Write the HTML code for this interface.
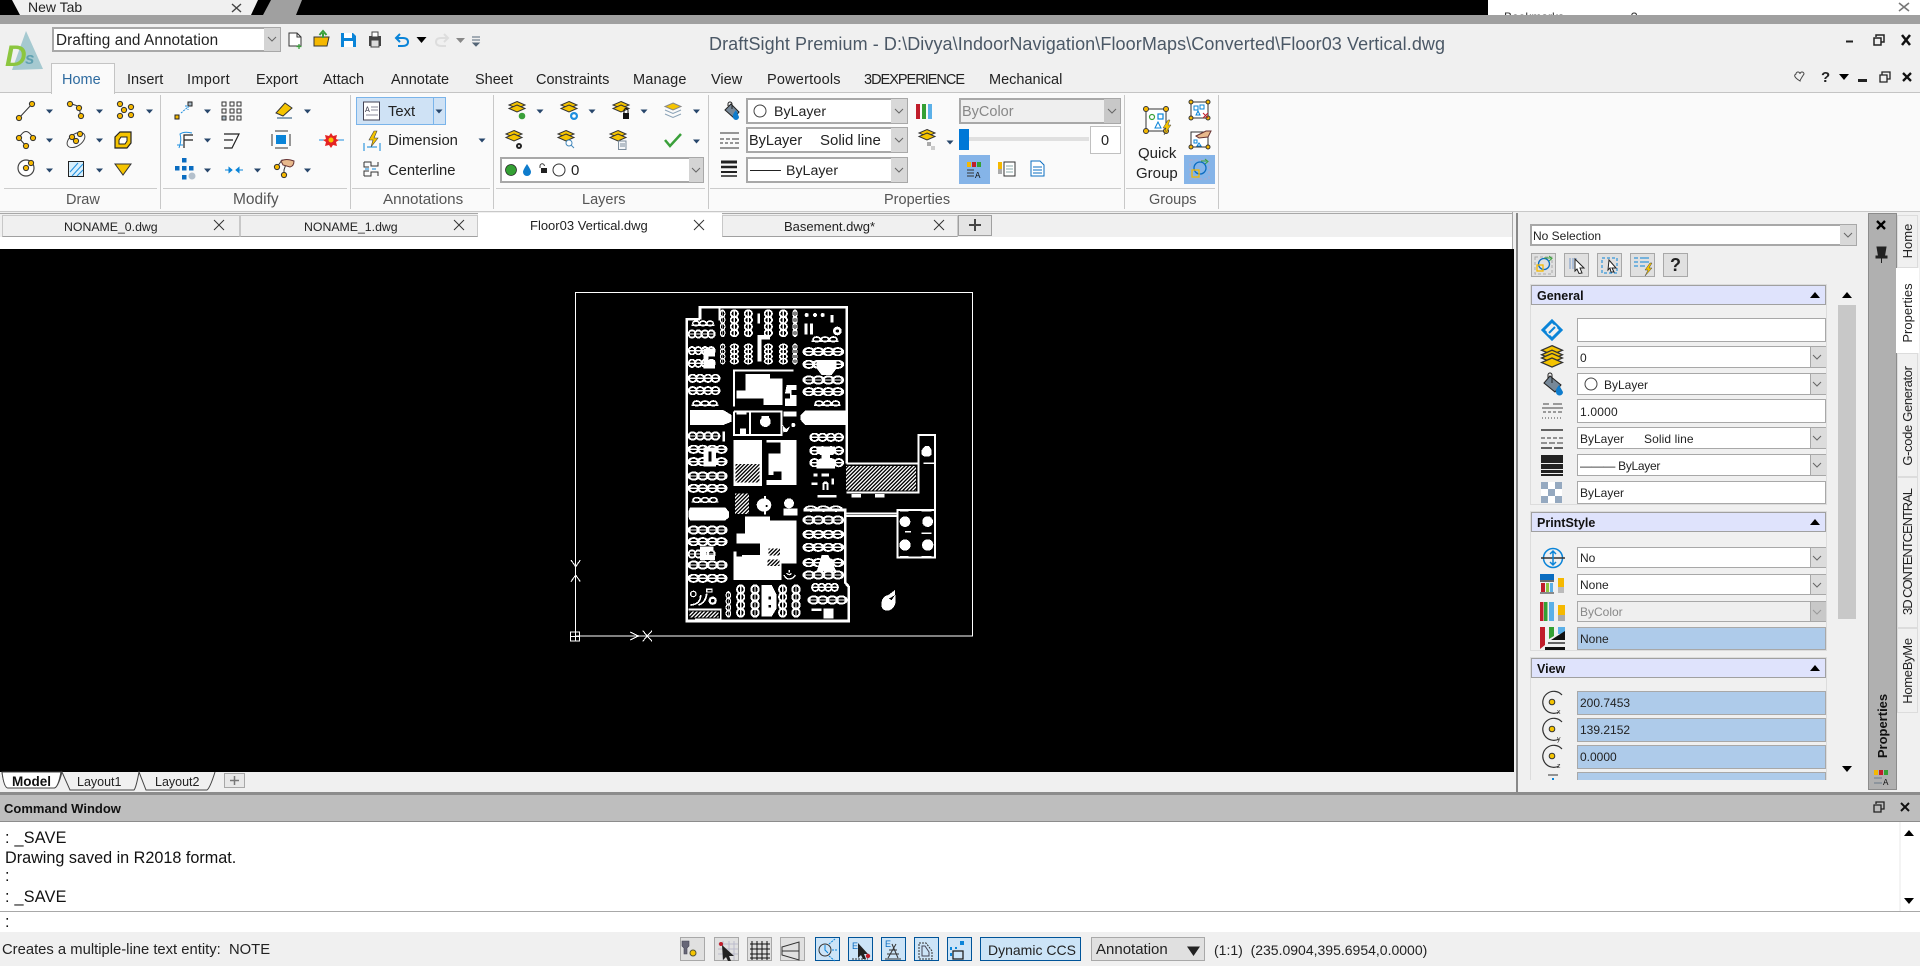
<!DOCTYPE html>
<html><head><meta charset="utf-8"><title>DraftSight</title>
<style>
html,body{margin:0;padding:0;width:1920px;height:966px;overflow:hidden;background:#f0f0f0;font-family:"Liberation Sans",sans-serif}
.a{position:absolute}
.t{position:absolute;white-space:nowrap;line-height:20px;font-size:14.5px;color:#222}
.c{position:absolute;box-sizing:border-box;background:#fff;border:2px solid #a8a8a8}
.f{position:absolute;box-sizing:border-box;background:#fff;border:1px solid #a8a8a8;left:1577px;width:249px}
.b{background:#aecbea}
.s{font-size:12px}
.h{position:absolute;box-sizing:border-box;left:1531px;width:295px;height:20px;background:#dfe3fc;border:1px solid #a0a0a0}
.o{position:absolute;box-sizing:border-box;left:1530px;width:297px;border:1px solid #dcdcdc}
.r{position:absolute;white-space:nowrap;font-size:13px;line-height:16px;color:#222;transform:translate(-50%,-50%) rotate(-90deg)}
.q{position:absolute;box-sizing:border-box;background:#e0e0e0;border:1px solid #a8a8a8;top:253px;width:25px;height:24px}
.g{position:absolute;box-sizing:border-box;top:937px;height:24px;background:#e0e0e0;border:1px solid #a8a8a8}
.k{background:#cce4f7;border:1px solid #005499}
.dt{position:absolute;box-sizing:border-box;top:215px;height:22px;background:#f0f0f0;border:1px solid #c8c8c8;border-bottom:1px solid #a0a0a0}
.l{color:#555;font-size:14.5px}
</style></head><body>

<!-- backgrounds -->
<div class="a" style="left:0;top:0;width:1920px;height:15px;background:#000"></div>
<div class="a" style="left:1488px;top:0;width:432px;height:15px;background:#fff"></div>
<div class="a" style="left:0;top:15px;width:1920px;height:9px;background:#a0a0a0"></div>
<div class="a" style="left:0;top:24px;width:1920px;height:69px;background:#f0f0f0;border-bottom:1px solid #c4c4c4;box-sizing:border-box"></div>
<div class="a" style="left:0;top:93px;width:1920px;height:119px;background:#fafafa;border-bottom:1px solid #c8c8c8;box-sizing:border-box"></div>
<div class="a" style="left:51px;top:63px;width:64px;height:31px;background:#fafafa;border:1px solid #c4c4c4;border-bottom:0;box-sizing:border-box"></div>
<div class="a" style="left:0;top:213px;width:1513px;height:1px;background:#a8a8a8"></div>
<div class="a" style="left:0;top:237px;width:1513px;height:12px;background:#fff"></div>
<div class="a" style="left:0;top:249px;width:1514px;height:523px;background:#000"></div>
<div class="a" style="left:1512px;top:212px;width:1px;height:37px;background:#a8a8a8"></div>
<div class="a" style="left:1516px;top:213px;width:2px;height:579px;background:#888"></div>

<!-- doc tabs -->
<div class="dt" style="left:2px;width:238px"></div>
<div class="dt" style="left:240px;width:238px"></div>
<div class="a" style="left:478px;top:213px;width:244px;height:25px;background:#fff"></div>
<div class="dt" style="left:722px;width:236px"></div>
<div class="dt" style="left:958px;width:34px;height:21px;background:#e4e4e4;border:1px solid #a0a0a0"></div>

<!-- ribbon seps -->
<div class="a" style="left:160px;top:95px;width:1px;height:114px;background:#c8c8c8"></div>
<div class="a" style="left:350px;top:95px;width:1px;height:114px;background:#c8c8c8"></div>
<div class="a" style="left:493px;top:95px;width:1px;height:114px;background:#c8c8c8"></div>
<div class="a" style="left:708px;top:95px;width:1px;height:114px;background:#c8c8c8"></div>
<div class="a" style="left:1124px;top:95px;width:1px;height:114px;background:#c8c8c8"></div>
<div class="a" style="left:1218px;top:95px;width:1px;height:114px;background:#c8c8c8"></div>
<div class="a" style="left:4px;top:188px;width:153px;height:1px;background:#ccc"></div>
<div class="a" style="left:163px;top:188px;width:184px;height:1px;background:#ccc"></div>
<div class="a" style="left:352px;top:188px;width:138px;height:1px;background:#ccc"></div>
<div class="a" style="left:496px;top:188px;width:209px;height:1px;background:#ccc"></div>
<div class="a" style="left:710px;top:188px;width:411px;height:1px;background:#ccc"></div>
<div class="a" style="left:1126px;top:188px;width:89px;height:1px;background:#ccc"></div>

<!-- combos ribbon -->
<div class="c" style="left:52px;top:27px;width:229px;height:25px"></div>
<div class="a" style="left:264px;top:28px;width:16px;height:23px;background:#d4d4d4"></div>
<div class="a" style="left:356px;top:97px;width:90px;height:28px;background:#cfe2f5;border:1px solid #7ab4ea;box-sizing:border-box"></div>
<div class="a" style="left:433px;top:97px;width:1px;height:28px;background:#7ab4ea"></div>
<div class="c" style="left:500px;top:157px;width:204px;height:26px"></div>
<div class="a" style="left:689px;top:158px;width:14px;height:24px;background:#d4d4d4"></div>
<div class="c" style="left:746px;top:98px;width:162px;height:26px"></div>
<div class="c" style="left:746px;top:127px;width:162px;height:26px"></div>
<div class="c" style="left:746px;top:157px;width:162px;height:26px"></div>
<div class="a" style="left:891px;top:99px;width:16px;height:24px;background:#d8d8d8"></div>
<div class="a" style="left:891px;top:128px;width:16px;height:24px;background:#d8d8d8"></div>
<div class="a" style="left:891px;top:158px;width:16px;height:24px;background:#d8d8d8"></div>
<div class="c" style="left:959px;top:98px;width:162px;height:26px;background:#efefef"></div>
<div class="a" style="left:1104px;top:99px;width:16px;height:24px;background:#c8c8c8"></div>
<div class="a" style="left:969px;top:137px;width:120px;height:4px;background:#e0e0e0"></div>
<div class="a" style="left:959px;top:129px;width:10px;height:21px;background:#0078d7"></div>
<div class="a" style="left:1090px;top:126px;width:31px;height:28px;background:#fff;border:1px solid #c0c0c0;box-sizing:border-box"></div>
<div class="a" style="left:959px;top:155px;width:31px;height:29px;background:#85b4e8"></div>
<div class="a" style="left:1184px;top:155px;width:31px;height:29px;background:#85b4e8"></div>

<!-- right panel -->
<div class="c" style="left:1530px;top:224px;width:327px;height:22px"></div>
<div class="a" style="left:1840px;top:225px;width:16px;height:20px;background:#d8d8d8"></div>
<div class="q" style="left:1531px"></div><div class="q" style="left:1564px"></div><div class="q" style="left:1597px"></div><div class="q" style="left:1630px"></div><div class="q" style="left:1663px"></div>
<div class="o" style="top:284px;height:221px"></div>
<div class="o" style="top:511px;height:140px"></div>
<div class="o" style="top:657px;height:123px;border-bottom:0"></div>
<div class="h" style="top:285px"></div>
<div class="h" style="top:512px"></div>
<div class="h" style="top:658px"></div>
<div class="f" style="top:318px;height:24px"></div>
<div class="f" style="top:346px;height:22px"></div>
<div class="f" style="top:373px;height:22px"></div>
<div class="f" style="top:399px;height:24px"></div>
<div class="f" style="top:427px;height:22px"></div>
<div class="f" style="top:454px;height:22px"></div>
<div class="f" style="top:481px;height:23px"></div>
<div class="f" style="top:547px;height:21px"></div>
<div class="f" style="top:574px;height:21px"></div>
<div class="f" style="top:601px;height:21px;background:#efefef"></div>
<div class="f b" style="top:627px;height:23px"></div>
<div class="f b" style="top:691px;height:24px"></div>
<div class="f b" style="top:718px;height:24px"></div>
<div class="f b" style="top:745px;height:24px"></div>
<div class="f b" style="top:772px;height:8px;border-bottom:0"></div>
<div class="a" style="left:1810px;top:347px;width:15px;height:20px;background:#dcdcdc;border-left:1px solid #a8a8a8"></div>
<div class="a" style="left:1810px;top:374px;width:15px;height:20px;background:#dcdcdc;border-left:1px solid #a8a8a8"></div>
<div class="a" style="left:1810px;top:428px;width:15px;height:20px;background:#dcdcdc;border-left:1px solid #a8a8a8"></div>
<div class="a" style="left:1810px;top:455px;width:15px;height:20px;background:#dcdcdc;border-left:1px solid #a8a8a8"></div>
<div class="a" style="left:1810px;top:548px;width:15px;height:19px;background:#dcdcdc;border-left:1px solid #a8a8a8"></div>
<div class="a" style="left:1810px;top:575px;width:15px;height:19px;background:#dcdcdc;border-left:1px solid #a8a8a8"></div>
<div class="a" style="left:1810px;top:602px;width:15px;height:19px;background:#c8c8c8;border-left:1px solid #a8a8a8"></div>
<div class="a" style="left:1838px;top:305px;width:18px;height:314px;background:#c8c8c8"></div>

<!-- vertical strip -->
<div class="a" style="left:1868px;top:213px;width:29px;height:577px;background:#b0b0b0;border:1px solid #8c8c8c;box-sizing:border-box"></div>
<div class="a" style="left:1897px;top:215px;width:21px;height:53px;background:#f0f0f0;border:1px solid #dcdcdc;box-sizing:border-box"></div>
<div class="a" style="left:1896px;top:268px;width:23px;height:85px;background:#fff"></div>
<div class="a" style="left:1897px;top:353px;width:21px;height:124px;background:#f0f0f0;border:1px solid #dcdcdc;box-sizing:border-box"></div>
<div class="a" style="left:1897px;top:477px;width:21px;height:151px;background:#f0f0f0;border:1px solid #dcdcdc;box-sizing:border-box"></div>
<div class="a" style="left:1897px;top:628px;width:21px;height:85px;background:#f0f0f0;border:1px solid #dcdcdc;box-sizing:border-box"></div>

<!-- model tabs, command -->
<div class="a" style="left:0;top:772px;width:1516px;height:19px;background:#f0f0f0"></div>
<div class="a" style="left:0;top:792px;width:1920px;height:3px;background:#8c8c8c"></div>
<div class="a" style="left:0;top:795px;width:1920px;height:26px;background:#bebebe;border-bottom:1px solid #8c8c8c"></div>
<div class="a" style="left:0;top:822px;width:1920px;height:89px;background:#fff"></div>
<div class="a" style="left:0;top:911px;width:1920px;height:1px;background:#a8a8a8"></div>
<div class="a" style="left:0;top:912px;width:1920px;height:20px;background:#fff"></div>
<div class="a" style="left:0;top:932px;width:1920px;height:34px;background:#f0f0f0"></div>
<div class="a" style="left:224px;top:773px;width:21px;height:15px;background:#e8e8e8;border:1px solid #a8a8a8;box-sizing:border-box"></div>

<!-- status buttons -->
<div class="g" style="left:680px;width:25px"></div>
<div class="g" style="left:714px;width:25px"></div>
<div class="g" style="left:747px;width:25px"></div>
<div class="g" style="left:780px;width:25px"></div>
<div class="g k" style="left:815px;width:25px"></div>
<div class="g k" style="left:848px;width:25px"></div>
<div class="g k" style="left:881px;width:25px"></div>
<div class="g k" style="left:914px;width:25px"></div>
<div class="g k" style="left:947px;width:25px"></div>
<div class="g k" style="left:980px;width:101px"></div>
<div class="g" style="left:1091px;width:114px"></div>

<!-- Floor plan -->
<svg class="a" style="left:560px;top:280px" width="440" height="370" viewBox="0 0 1320 1110" shape-rendering="crispEdges">
<defs>
<pattern id="ht" patternUnits="userSpaceOnUse" width="8" height="8" patternTransform="rotate(45)"><rect width="8" height="8" fill="#000"/><rect width="3.6" height="8" fill="#fff"/></pattern>
<g id="h" fill="none" stroke="#fff" stroke-width="5.500"><ellipse cx="11" cy="0" rx="10" ry="11"/><ellipse cx="30" cy="0" rx="10" ry="11"/><ellipse cx="50" cy="0" rx="10" ry="11"/><ellipse cx="69" cy="0" rx="10" ry="11"/><path d="M0 0H80" stroke-width="4"/></g>
<g id="m" fill="none" stroke="#fff" stroke-width="5"><path d="M0 6H80" stroke-width="4"/><ellipse cx="15" cy="0" rx="11" ry="7"/><ellipse cx="40" cy="0" rx="11" ry="7"/><ellipse cx="65" cy="0" rx="11" ry="7"/></g>
</defs>
<g fill="none" stroke="#fff">
<path d="M46 38H1238V1068H46Z" stroke-width="3.2"/>
<path d="M420 118V82H860V550M420 118H380V1023H866V920L856 908V690H730" stroke-width="8"/>
<path d="M478 82V122M522 380V272H700M522 395V465H664V395H522M570 395V465" stroke-width="6"/>
<path d="M1075 550V465H1125V690M860 550H1075V638H860M856 700H1012M856 708H1012M1012 690H1125V832H1012Z" stroke-width="6"/>
<path d="M1090 550H1125" stroke-width="5"/>
<path d="M46 636V1068" stroke-width="3.2"/>
<path d="M46 1068H232M210 1056L236 1068L210 1080M248 1052L276 1084M276 1052L248 1084M33 840L47 860L61 840M33 905L47 885L61 905" stroke-width="3.2"/>
<rect x="32" y="1056" width="27" height="27" stroke-width="3.2"/><path d="M46 1056V1083M32 1069H59" stroke-width="3"/>
</g>
<!-- left rows -->
<use href="#m" transform="translate(395,130) scale(.85,1)"/>
<use href="#h" x="385" y="162"/>
<use href="#h" x="385" y="212"/>
<use href="#h" x="385" y="250"/>
<use href="#h" transform="translate(385,295) scale(1.18,1)"/>
<use href="#h" transform="translate(385,332) scale(1.18,1)"/>
<use href="#m" x="395" y="370"/>
<use href="#h" transform="translate(385,468) scale(1.18,1)"/>
<use href="#h" transform="translate(385,508) scale(1.44,1)"/>
<use href="#h" transform="translate(385,545) scale(1.44,1)"/>
<use href="#h" transform="translate(385,588) scale(1.44,1)"/>
<use href="#h" transform="translate(385,625) scale(1.44,1)"/>
<use href="#m" x="395" y="660"/>
<use href="#h" transform="translate(385,750) scale(1.44,1)"/>
<use href="#h" transform="translate(385,785) scale(1.44,1)"/>
<use href="#h" x="385" y="822"/>
<use href="#h" transform="translate(385,855) scale(1.44,1)"/>
<use href="#h" transform="translate(385,895) scale(1.44,1)"/>
<!-- right rows -->
<use href="#m" x="755" y="178"/>
<use href="#h" transform="translate(730,215) scale(1.5,1)"/>
<use href="#h" transform="translate(730,253) scale(1.5,1)"/>
<use href="#h" transform="translate(730,300) scale(1.5,1)"/>
<use href="#h" transform="translate(730,335) scale(1.5,1)"/>
<use href="#m" x="762" y="370"/>
<use href="#h" transform="translate(750,472) scale(1.25,1)"/>
<use href="#h" transform="translate(750,512) scale(1.25,1)"/>
<use href="#h" transform="translate(750,548) scale(1.25,1)"/>
<use href="#m" transform="translate(730,686) scale(1.5,1)"/>
<use href="#h" transform="translate(730,720) scale(1.5,1)"/>
<use href="#h" transform="translate(730,763) scale(1.5,1)"/>
<use href="#h" transform="translate(730,802) scale(1.5,1)"/>
<use href="#h" transform="translate(730,848) scale(1.5,1)"/>
<use href="#h" transform="translate(730,885) scale(1.5,1)"/>
<use href="#h" x="755" y="922"/>
<use href="#h" transform="translate(745,960) scale(1.44,1)"/>
<!-- vertical columns -->
<use href="#h" transform="translate(488,90) rotate(90) scale(1,.6)"/>
<use href="#h" transform="translate(523,90) rotate(90)"/>
<use href="#h" transform="translate(565,90) rotate(90)"/>
<use href="#h" transform="translate(625,90) rotate(90)"/>
<use href="#h" transform="translate(670,90) rotate(90)"/>
<use href="#h" transform="translate(705,90) rotate(90) scale(1,.6)"/>
<use href="#h" transform="translate(488,192) rotate(90) scale(.75,.6)"/>
<use href="#h" transform="translate(523,192) rotate(90) scale(.75,1)"/>
<use href="#h" transform="translate(565,192) rotate(90) scale(.75,1)"/>
<use href="#h" transform="translate(625,192) rotate(90) scale(.75,1)"/>
<use href="#h" transform="translate(670,192) rotate(90) scale(.75,1)"/>
<use href="#h" transform="translate(705,192) rotate(90) scale(.75,.6)"/>
<use href="#h" transform="translate(505,935) rotate(90) scale(.95,.6)"/>
<use href="#h" transform="translate(542,915) rotate(90) scale(1.2,1)"/>
<use href="#h" transform="translate(585,915) rotate(90) scale(1.2,1)"/>
<use href="#h" transform="translate(668,915) rotate(90) scale(1.2,1)"/>
<use href="#h" transform="translate(708,915) rotate(90) scale(1.2,1)"/>
<g fill="#fff">
<!-- top right misc -->
<circle cx="740" cy="105" r="6"/><circle cx="765" cy="105" r="6"/><circle cx="788" cy="105" r="6"/><rect x="811" y="105" width="10" height="22"/>
<rect x="733" y="130" width="9" height="34"/><rect x="750" y="130" width="9" height="34"/><path d="M775 135a14 14 0 1 1 0 28a6 6 0 0 0 0-28Z"/>
<path d="M832 140a13 13 0 1 0 .1 0Zm0 8a5 5 0 1 1-.1 0Z"/>
<rect x="592" y="165" width="12" height="80"/><path d="M604 165H630V178H604Z"/><rect x="592" y="100" width="8" height="30"/>
<!-- blobs -->
<path d="M430 205H465V230H445V240H465V265H430Z"/>
<path d="M770 240H830V265L815 285H785L770 265Z"/>
<path d="M556 282H630V296H668V375H610V355H530V332H556Z"/>
<path d="M680 315H710V330H695V345H710V378H675V355H690V340H675Z"/>
<path d="M390 390H490L515 405V425L490 435H390Z"/>
<path d="M735 392H860V435H735L722 420V405Z"/>
<path d="M600 425a16 16 0 0 0 32 0a16 16 0 0 0-32 0Z"/><rect x="605" y="408" width="22" height="5"/>
<rect x="670" y="395" width="40" height="15"/><rect x="530" y="395" width="30" height="8"/><rect x="540" y="445" width="18" height="18"/>
<path d="M668 435l10 12l12-8l-8 16l-12 2Z"/><circle cx="700" cy="435" r="6"/>
<rect x="487" y="455" width="8" height="30"/>
<rect x="520" y="480" width="86" height="138"/>
<path d="M620 480H710V615H620V600H665V575H640V585H625V520H662V488H620Z"/>
<path d="M430 503H468V560H430ZM770 500H825V520H810V540H825V565H770V540H785V520H770Z"/>
<rect x="760" y="580" width="12" height="10"/><rect x="785" y="580" width="22" height="10"/><rect x="755" y="607" width="18" height="8"/>
<path d="M788 630V610Q796 598 806 610V630H800V612H794V630Z"/><rect x="814" y="595" width="8" height="18"/>
<rect x="772" y="645" width="58" height="7"/><rect x="875" y="642" width="28" height="10"/><rect x="945" y="642" width="28" height="10"/>
<path d="M590 675a22 20 0 1 0 44 0a22 20 0 1 0-44 0Z"/><rect x="612" y="648" width="6" height="55"/>
<path d="M672 670a15 15 0 1 0 30 0a15 15 0 1 0-30 0Zm7-8v4h16v-4Z"/><rect x="670" y="686" width="42" height="20"/>
<path d="M390 682H495L507 695V712L495 722H390L385 710V695Z"/>
<path d="M555 710H630V722H710V850H665V900H520V815H540V825H600V790H530V760H555Z"/>
<path d="M420 800H460V815H440V825H465V840H420Z"/>
<path d="M785 825H805L830 875H770Z"/>
<path d="M1085 510l10-12h12l8 12v14l-8 6h-14l-8-6Z"/>
<circle cx="1035" cy="725" r="16"/><circle cx="1103" cy="725" r="16"/><circle cx="1035" cy="795" r="17"/><circle cx="1103" cy="795" r="17"/>
<path d="M1005 930L1007 968Q1000 992 980 992Q962 990 964 968Q968 948 985 945Z"/>
<path d="M605 915h30l15 30v40l-15 25h-30Z"/>
<rect x="790" y="985" width="30" height="30"/><rect x="755" y="985" width="30" height="8"/>
<rect x="385" y="985" width="95" height="6"/><rect x="480" y="985" width="4" height="35"/>
<rect x="405" y="1015" width="78" height="6"/>
</g>
<!-- holes and hatch -->
<g fill="#000">
<circle cx="620" cy="678" r="3"/><rect x="625" y="950" width="8" height="8"/><rect x="625" y="975" width="8" height="8"/>
<rect x="445" y="515" width="10" height="30"/><rect x="557" y="805" width="35" height="8"/>
<path d="M568 815h15l-5-15l-15 15ZM530 815h20l-5 15h-15Z"/><path d="M1005 945l-10 15l-8-4Z"/>
<rect x="665" y="850" width="46" height="52"/>
</g>
<g fill="none" stroke="#fff" stroke-width="4">
<path d="M672 885q6 12 14 12q14 0 20-12M680 880q8 8 14 0M688 870v8"/>
<circle cx="458" cy="962" r="9" stroke-width="7"/><path d="M422 945q0 28-30 30M440 940q-2 28-25 35" stroke-width="5"/><circle cx="400" cy="942" r="8"/>
<rect x="440" y="928" width="16" height="8"/>
</g>
<rect x="527" y="552" width="72" height="55" fill="url(#ht)"/>
<rect x="525" y="640" width="42" height="62" fill="url(#ht)"/>
<rect x="858" y="558" width="210" height="74" fill="url(#ht)"/>
<rect x="625" y="805" width="35" height="22" fill="url(#ht)"/>
<rect x="622" y="838" width="36" height="20" fill="url(#ht)"/>
<rect x="388" y="995" width="88" height="18" fill="url(#ht)"/>
<g fill="none" stroke="#fff" stroke-width="5"><path d="M1020 692h25M1085 692h30M1035 755h18M1085 760h30M1020 830h25M1085 830h30"/></g>
</svg>

<!-- Icon overlay -->
<svg class="a" style="left:0;top:0" width="1920" height="966" viewBox="0 0 1920 966">
<defs>
<circle id="n" r="2.6" fill="#f5b800" stroke="#333" stroke-width="1"/>
<path id="ar" d="M-3.5-1.5H3.5L0 2.5Z" fill="#27466b"/>
<path id="cv" d="M-4-2L0 2L4-2" fill="none" stroke="#666" stroke-width="1"/>
<g id="st"><path d="M0-5.500L8-2L0 1.500L-8-2Z" fill="#f5c400" stroke="#333" stroke-width="1"/><path d="M0-2L8 1.500L0 5L-8 1.500Z" fill="#f5c400" stroke="#333" stroke-width="1"/></g>
<path id="dn" d="M-5-3H5L0 3Z" fill="#000"/>
<path id="up" d="M-5 3H5L0-3Z" fill="#000"/>
</defs>
<!-- top chrome tab -->
<path d="M12 0H258L251 15H20Z" fill="#f0f0f0"/>
<path d="M271 0H302L296 15H263Z" fill="#a0a0a0"/>
<path d="M232 4L241 12M241 4L232 12" stroke="#444" stroke-width="1.4"/>
<path d="M1899 3L1909 11M1909 3L1899 11" stroke="#777" stroke-width="1.6"/>
<!-- logo -->
<path d="M26 31L43 69L12 70Z" fill="#9cc4cc" opacity=".9"/>
<text x="5" y="66" font-family="Liberation Sans" font-size="30" font-weight="bold" font-style="italic" fill="#8cc63f">D</text>
<text x="25" y="64" font-family="Liberation Sans" font-size="17" font-weight="bold" font-style="italic" fill="#5fa0b0">s</text>
<use href="#cv" x="272" y="39"/>
<!-- QAT -->
<path d="M289 33H297L301 37V46H289Z" fill="#fff" stroke="#333"/><path d="M297 33V37H301" fill="none" stroke="#333"/><path d="M299 44V49M296.5 46.5H301.5" stroke="#3aa03a" stroke-width="1.3"/>
<path d="M314 46V37H329L327 46Z" fill="#f5b800" stroke="#333"/><path d="M323 38V33M319.5 35L323 31L326.5 35" stroke="#3aa03a" stroke-width="2" fill="none"/>
<path d="M341 33H353L356 36V47H341Z" fill="#0a84d8"/><rect x="344" y="33" width="8" height="5" fill="#fff"/><rect x="344" y="41" width="9" height="6" fill="#fff"/>
<path d="M369 36H381V46H369Z" fill="#444"/><rect x="372" y="32" width="6" height="5" fill="#fff" stroke="#444"/><rect x="371" y="40" width="8" height="7" fill="#ddd" stroke="#444"/>
<path d="M400 34L396 38L400 42M396 38H403Q408 38 408 42Q408 46 402 46H398" fill="none" stroke="#0a84d8" stroke-width="2"/>
<use href="#dn" x="421.500" y="40"/>
<path d="M444 34L448 38L444 42M448 38H441Q436 38 436 42Q436 46 442 46H446" fill="none" stroke="#ddd" stroke-width="2"/>
<path d="M456 38H465L460.500 43Z" fill="#888"/>
<path d="M472 37H480M472 40H480M473 43H479L476 46Z" stroke="#567" fill="#567" stroke-width="1"/>
<!-- window controls -->
<path d="M1846 41.500H1853" stroke="#222" stroke-width="2"/>
<path d="M1876 37V35H1884V42H1881M1874 38H1881V45H1874Z" fill="none" stroke="#222" stroke-width="1.500"/>
<path d="M1902 35L1910 45M1910 35L1902 45" stroke="#111" stroke-width="2.500"/>
<path d="M1798 74a2 2 0 0 1 4 0a2 2 0 0 1 4 -0Q1802 80 1802 81Q1794 76 1798 74Z" transform="translate(-2,0)" fill="none" stroke="#444"/>
<use href="#dn" x="1844" y="77"/>
<path d="M1858 80.500H1867" stroke="#222" stroke-width="3"/>
<path d="M1882 75V72H1890V79H1887M1880 75H1887V82H1880Z" fill="none" stroke="#222" stroke-width="1.300"/>
<path d="M1903 73L1911 81M1911 73L1903 81" stroke="#111" stroke-width="2.300"/>
<!-- arrows -->
<g>
<use href="#ar" x="49.500" y="111"/><use href="#ar" x="99.500" y="111"/><use href="#ar" x="149.500" y="111"/>
<use href="#ar" x="49.500" y="140"/><use href="#ar" x="99.500" y="140"/>
<use href="#ar" x="49.500" y="170"/><use href="#ar" x="99.500" y="170"/>
<use href="#ar" x="207.500" y="111"/><use href="#ar" x="307.500" y="111"/>
<use href="#ar" x="207.500" y="140"/>
<use href="#ar" x="207.500" y="170"/><use href="#ar" x="257.500" y="170"/><use href="#ar" x="307.500" y="170"/>
<use href="#ar" x="439" y="111"/><use href="#ar" x="482" y="140"/>
<use href="#ar" x="540" y="111"/><use href="#ar" x="592" y="111"/><use href="#ar" x="644" y="111"/><use href="#ar" x="696.500" y="111"/><use href="#ar" x="696.500" y="141"/>
<use href="#ar" x="950" y="142"/>
</g>
<!-- Draw -->
<path d="M19 118L32 104M70 104Q78 105 79 108L81 116" fill="none" stroke="#333"/>
<use href="#n" x="19" y="118"/><use href="#n" x="32" y="104"/><use href="#n" x="70" y="104"/><use href="#n" x="79" y="108"/><use href="#n" x="81" y="116"/>
<use href="#n" x="120" y="104"/><use href="#n" x="131" y="107"/><use href="#n" x="124" y="110"/><use href="#n" x="120" y="116"/><use href="#n" x="131" y="115"/>
<path d="M19 138Q26 125 33 138M19 138L26 146" fill="none" stroke="#333"/><use href="#n" x="19" y="138"/><use href="#n" x="33" y="138"/><use href="#n" x="26" y="146"/>
<ellipse cx="76" cy="140" rx="10" ry="6" transform="rotate(-35 76 140)" fill="none" stroke="#444"/><use href="#n" x="72" y="137"/><use href="#n" x="76" y="141"/><use href="#n" x="80" y="134"/>
<path d="M120 132H131V143L127 148H115V137Z" fill="#f5c400" stroke="#222" stroke-width="1.200"/><path d="M121 137H127V141L125 144H119V140Z" fill="#fff" stroke="#222"/>
<circle cx="26" cy="168" r="8" fill="#fff" stroke="#444" stroke-width="1.200"/><use href="#n" x="26" y="168"/><use href="#n" x="31" y="163"/>
<rect x="68.500" y="161.500" width="15" height="15" fill="#d8effc" stroke="#222"/><path d="M70 172L78 163M72 176L83 164M77 176L83 170" stroke="#1e8fdf"/>
<path d="M115 164H131L123 175Z" fill="#f5c400" stroke="#333"/>
<!-- Modify -->
<rect x="175" y="115" width="4" height="4" fill="#f5b800" stroke="#222"/><rect x="188" y="102" width="4" height="4" fill="#a8b8c4" stroke="#222"/><path d="M181 113L188 107M185 106H188V110" stroke="#1e8fdf" fill="none" stroke-dasharray="2 1"/>
<g fill="none" stroke="#333"><rect x="222" y="102" width="4" height="4"/><rect x="230" y="102" width="4" height="4"/><rect x="237" y="102" width="4" height="4"/><rect x="222" y="109" width="4" height="4"/><rect x="230" y="109" width="4" height="4"/><rect x="237" y="109" width="4" height="4"/><rect x="222" y="116" width="4" height="4" fill="#a8b8c4"/><rect x="230" y="116" width="4" height="4"/><rect x="237" y="116" width="4" height="4"/></g>
<path d="M276 113L285 103L292 108L283 116Z" fill="#f5c400" stroke="#333"/><path d="M277 118H292" stroke="#8aa2b6" stroke-width="2"/>
<path d="M184 148V135H193M184 140H193" fill="none" stroke="#222" stroke-width="1.200"/><path d="M177 145H183M179 148Q182 140 180 134Q184 131 192 133" fill="none" stroke="#1e8fdf"/>
<path d="M224 134H239L232 148H224M224 140H233" fill="none" stroke="#222" stroke-width="1.200"/>
<rect x="276" y="135" width="10" height="9" fill="#0a84d8"/><path d="M272 134V146M290 134V146M275 131H288M275 148H288" stroke="#333"/>
<path d="M319 140H324M338 140H344" stroke="#1e8fdf"/><path d="M331 133l2 3l4-1l-1 4l3 1l-3 2l1 4l-4-1l-2 3l-2-3l-4 1l1-4l-3-2l3-1l-1-4l4 1Z" fill="#e52222"/><circle cx="331" cy="140" r="2.500" fill="#f5c400"/>
<g fill="#0a6cc0"><rect x="182" y="158" width="4.500" height="4.500"/><rect x="175" y="166" width="4.500" height="4.500"/><rect x="182" y="166" width="4.500" height="4.500"/><rect x="189" y="166" width="4.500" height="4.500"/><rect x="182" y="175" width="4.500" height="4.500"/></g><circle cx="192" cy="176" r="3.500" fill="#b4c0cc"/>
<path d="M225 170H231M237 170H243M232 170l-3-2.500v5ZM236 170l3-2.500v5Z" stroke="#0a84d8" fill="#0a84d8"/>
<path d="M277 167L282 160L287 161L284 170L284 175" fill="none" stroke="#333"/><use href="#n" x="277" y="167"/><use href="#n" x="284" y="175"/><path d="M281 161Q286 158 294 161Q294 166 290 167L283 165Z" fill="#e8b98c" stroke="#633"/>
<!-- Annotation -->
<rect x="363.500" y="102" width="16" height="18" fill="#fff" stroke="#445"/><text x="365" y="112" font-family="Liberation Mono" font-size="8" fill="#445">A</text><path d="M371 107H378M371 110H378M366 115H378" stroke="#889"/>
<path d="M374 131L369 140H373L371 147L378 138H374L377 131Z" fill="#f5c400" stroke="#444" stroke-width=".6"/><path d="M364 143V151M380 143V151M367 147H377" stroke="#0a84d8"/>
<path d="M364 162H371V166H378V162M364 176H371V172H378V176M364 162V167H369M364 176V171H369" fill="none" stroke="#333"/><path d="M365 169H369M372 169H376" stroke="#0a84d8"/>
<!-- Layers -->
<use href="#st" x="517" y="107"/><circle cx="522" cy="116" r="3.300" fill="#3aa03a"/>
<use href="#st" x="569" y="107"/><circle cx="574" cy="116" r="4" fill="#1e8fdf"/><circle cx="574" cy="116" r="1.800" fill="#fff"/>
<use href="#st" x="621" y="107"/><rect x="623" y="113" width="6" height="6" fill="#111"/><path d="M624 113V110.500a2 2 0 0 1 4 0V113" fill="none" stroke="#111"/>
<path d="M673 103L681 106.500L673 110L665 106.500Z" fill="#f5c400" stroke="#888"/><path d="M665 110L673 113.500L681 110M665 114L673 117.500L681 114" fill="none" stroke="#8aa2b6"/>
<use href="#st" x="514" y="136"/><circle cx="519" cy="146" r="3" fill="#222"/><circle cx="519" cy="146" r="1" fill="#fff"/>
<use href="#st" x="566" y="136"/><circle cx="569" cy="143" r="3" fill="#fff" stroke="#4488bb"/><path d="M571 145L574 148" stroke="#4488bb"/>
<use href="#st" x="618" y="136"/><rect x="618.500" y="141" width="7.500" height="8.500" fill="#f4f6f8" stroke="#7c8c9c"/><path d="M620 144H625M620 146H625" stroke="#7c8c9c"/>
<path d="M665 140L670 146L681 134" fill="none" stroke="#3aa03a" stroke-width="2.500"/>
<use href="#cv" x="696" y="170"/>
<circle cx="511" cy="170" r="5.500" fill="#34a034" stroke="#222" stroke-width=".7"/>
<path d="M527 164Q523 170 523 172a4 4 0 0 0 8 0Q531 170 527 164Z" fill="#0f7ccc"/>
<path d="M540 168V166a2.200 2.200 0 0 1 4.400 0" fill="none" stroke="#333"/><rect x="541" y="168" width="6" height="5" fill="#222"/>
<circle cx="559" cy="170" r="6" fill="#fff" stroke="#333"/>
<!-- properties -->
<path d="M725 110L731 104L739 112L734 118Z" fill="#778898" stroke="#222"/><path d="M728 106V104a2 2 0 0 1 4 0V109" fill="none" stroke="#222"/><path d="M736 110Q732 115 733 117a3 3 0 0 0 6 0Z" fill="#0f7ccc"/>
<circle cx="760" cy="111" r="6" fill="#fff" stroke="#444"/>
<use href="#cv" x="899" y="111"/><use href="#cv" x="899" y="140"/><use href="#cv" x="899" y="170"/><use href="#cv" x="1112" y="111"/>
<path d="M720 133H739M720 139H724M726 139H730M732 139H739M720 143H723M725 143H728M730 143H733M735 143H739M720 148H739" stroke="#333"/>
<path d="M721 162H737" stroke="#222" stroke-width="3"/><path d="M721 167H737" stroke="#222" stroke-width="2.500"/><path d="M721 172H737" stroke="#222" stroke-width="2"/><path d="M721 176H737" stroke="#222" stroke-width="1.500"/>
<path d="M750 170.500H781" stroke="#222"/>
<rect x="916" y="104" width="4" height="15" fill="#c01d2a"/><rect x="922" y="104" width="4" height="15" fill="#34a034"/><rect x="928" y="104" width="4" height="15" fill="#5bb0e8"/>
<use href="#st" x="927" y="135"/><rect x="927" y="142" width="4" height="4" fill="#aaa"/><rect x="931" y="146" width="4" height="4" fill="#ccc"/>
<rect x="967" y="162" width="4" height="5" fill="#f5b800"/><rect x="972" y="162" width="4" height="5" fill="#c01d2a"/><rect x="977" y="162" width="4" height="5" fill="#34a034"/><path d="M967 170H974M967 173H974M967 176H974" stroke="#333"/><text x="975" y="178" font-family="Liberation Mono" font-size="9" fill="#111">A</text>
<rect x="998" y="162" width="4" height="7" fill="#f5b800"/><rect x="998" y="169" width="4" height="5" fill="#aaa"/><rect x="1004" y="162" width="11" height="14" fill="#fff" stroke="#333"/><path d="M1006 166H1013M1006 169H1013M1006 172H1013" stroke="#8aa"/>
<path d="M1031 161H1040L1044 165V176H1031Z" fill="#fff" stroke="#0a6cc0"/><path d="M1033 167H1042M1033 170H1042M1033 173H1042" stroke="#0a6cc0"/>
<!-- groups -->
<rect x="1146" y="109" width="20" height="22" fill="#fff" stroke="#333"/><g fill="#f5b800" stroke="#333"><circle cx="1146" cy="109" r="2.500"/><circle cx="1166" cy="109" r="2.500"/><circle cx="1146" cy="131" r="2.500"/><circle cx="1166" cy="131" r="2.500"/></g>
<circle cx="1152" cy="117" r="2.500" fill="none" stroke="#3aa03a" stroke-width="1.200"/><rect x="1158" y="114" width="5" height="5" fill="none" stroke="#0a84d8" stroke-width="1.200"/><path d="M1155 128L1158 122L1161 128Z" fill="none" stroke="#0a84d8"/><path d="M1168 120L1163 128H1166L1164 135L1171 125H1168L1170 120Z" fill="#f5c400" stroke="#444" stroke-width=".5"/>
<rect x="1191" y="102" width="17" height="16" fill="#fff" stroke="#333"/><g fill="#f5b800" stroke="#333"><circle cx="1191" cy="102" r="2"/><circle cx="1208" cy="102" r="2"/><circle cx="1191" cy="118" r="2"/><circle cx="1208" cy="118" r="2"/></g><path d="M1194 106h4v4h-4ZM1200 105h4v4h-4ZM1196 115l2-4l2 4Z" fill="none" stroke="#0a84d8"/><path d="M1203 113L1208 118M1208 113L1203 118" stroke="#c01d2a"/>
<rect x="1191" y="132" width="17" height="15" fill="#fff" stroke="#333"/><g fill="#f5b800" stroke="#333"><circle cx="1191" cy="147" r="2"/><circle cx="1208" cy="147" r="2"/></g><path d="M1196 136L1206 131H1211L1208 137L1199 138Z" fill="#e8b98c" stroke="#633"/><path d="M1194 140h3v3h-3ZM1197 146l2-3l2 3Z" fill="none" stroke="#0a84d8"/>
<rect x="1190" y="160" width="19" height="19" fill="none" stroke="#aac" stroke-dasharray="3 2"/><circle cx="1200" cy="168" r="6" fill="none" stroke="#0a6cc0" stroke-width="1.300"/><rect x="1192" y="170" width="7" height="7" fill="none" stroke="#f5b800" stroke-width="1.300"/><path d="M1201 161H1207M1205 159L1208 161.500L1205 164" stroke="#3aa03a" fill="none"/>
<!-- doc tab x -->
<path d="M214 220L224 230M224 220L214 230M454 220L464 230M464 220L454 230M694 220L704 230M704 220L694 230M934 220L944 230M944 220L934 230" stroke="#333"/>
<path d="M975 219V231M969 225H981" stroke="#444" stroke-width="2"/>
<!-- right panel -->
<use href="#cv" x="1848" y="235"/>
<use href="#up" x="1815" y="295"/><use href="#up" x="1815" y="522"/><use href="#up" x="1815" y="668"/>
<use href="#up" x="1847" y="295"/><use href="#dn" x="1847" y="769"/>
<use href="#cv" x="1817" y="357"/><use href="#cv" x="1817" y="384"/><use href="#cv" x="1817" y="438"/><use href="#cv" x="1817" y="465"/><use href="#cv" x="1817" y="558"/><use href="#cv" x="1817" y="585"/>
<path d="M1813 610L1817 614L1821 610" fill="none" stroke="#999"/>
<!-- top buttons -->
<rect x="1535" y="257" width="17" height="17" fill="none" stroke="#aaa" stroke-dasharray="3 2"/><circle cx="1544" cy="264" r="5.500" fill="none" stroke="#0a6cc0" stroke-width="1.300"/><rect x="1537" y="265" width="6" height="6" fill="none" stroke="#f5b800" stroke-width="1.300"/><path d="M1544 258H1551M1549 256L1552 258.500L1549 261" stroke="#3aa03a" fill="none"/>
<path d="M1570 258V269M1573 258V269M1576 258V269" stroke="#7a9ccc"/><path d="M1575 259L1584 268H1580L1582 273L1579 273.500L1577 269L1575 271Z" fill="#fff" stroke="#222"/>
<rect x="1602" y="258" width="15" height="15" fill="none" stroke="#0a84d8" stroke-dasharray="3 2"/><path d="M1609 260L1616 268H1612L1614 272H1611L1610 268L1608 270Z" fill="#fff" stroke="#222"/>
<path d="M1634 258H1638M1640 258H1649M1634 262H1638M1640 262H1649M1634 266H1638M1640 266H1645" stroke="#0a84d8"/><path d="M1650 263L1645 270H1648L1645 276L1652 268H1649L1652 263Z" fill="#f5c400" stroke="#444" stroke-width=".5"/>
<!-- row icons -->
<path d="M1552 321L1561 330L1552 339L1543 330Z" fill="none" stroke="#0a84d8" stroke-width="3"/><path d="M1548 334L1556 326" stroke="#f0f0f0" stroke-width="4"/><path d="M1549 333L1555 327" stroke="#0a84d8" stroke-width="2"/>
<g transform="translate(1552,358) scale(1.3)"><use href="#st" y="-4"/><use href="#st" y="2"/></g>
<path d="M1544 383L1550 376L1561 385L1555 392Z" fill="#778898" stroke="#222"/><path d="M1548 378V375a2 2 0 0 1 4 0V383" fill="none" stroke="#222"/><path d="M1559 385Q1555 390 1556 392a3.500 3.500 0 0 0 7 0Z" fill="#0f7ccc"/>
<path d="M1543 404H1549M1553 404H1562M1542 408H1563M1543 412H1546M1548 412H1551M1553 412H1556M1558 412H1562" stroke="#444"/><path d="M1542 418H1563" stroke="#444" stroke-dasharray="1 2"/>
<path d="M1541 430H1563" stroke="#333" stroke-width="1.500"/><path d="M1541 438H1563" stroke="#333" stroke-dasharray="4 2"/><path d="M1541 443H1563" stroke="#333" stroke-dasharray="6 2"/><path d="M1541 448H1552M1554 448H1563" stroke="#333" stroke-width="1.500"/>
<rect x="1541" y="455" width="22" height="8" fill="#222"/><rect x="1541" y="464" width="22" height="5" fill="#222"/><rect x="1541" y="470" width="22" height="3" fill="#222"/><rect x="1541" y="474" width="22" height="2" fill="#222"/>
<g fill="#95a9c0"><rect x="1541" y="482" width="7" height="7"/><rect x="1555" y="482" width="7" height="7"/><rect x="1548" y="489" width="7" height="7"/><rect x="1541" y="496" width="7" height="7"/><rect x="1555" y="496" width="7" height="7"/></g><g fill="#fff"><rect x="1548" y="482" width="7" height="7"/><rect x="1541" y="489" width="7" height="7"/><rect x="1555" y="489" width="7" height="7"/><rect x="1548" y="496" width="7" height="7"/></g>
<circle cx="1553" cy="558" r="9.500" fill="none" stroke="#0a84d8" stroke-width="1.500"/><path d="M1541 558H1565" stroke="#333" stroke-width="1.500"/><path d="M1553 552V564M1550 554L1553 551L1556 554M1550 562L1553 565L1556 562" fill="none" stroke="#0a84d8" stroke-width="1.500"/>
<rect x="1540" y="574" width="14" height="6" fill="#0a6cc0"/><path d="M1540 581H1554" stroke="#222" stroke-width="1.300"/><rect x="1541" y="583" width="4" height="9" fill="#c01d2a"/><rect x="1546" y="583" width="3" height="9" fill="#8cc63f"/><rect x="1550" y="583" width="3" height="9" fill="#5bb0e8"/><path d="M1540 593H1554" stroke="#222"/><rect x="1558" y="578" width="6" height="9" fill="#f5b800"/><rect x="1558" y="587" width="6" height="6" fill="#bbb"/>
<rect x="1540" y="602" width="3.500" height="19" fill="#c01d2a"/><rect x="1544" y="602" width="3.500" height="19" fill="#34a034"/><rect x="1549" y="602" width="5" height="19" fill="#5bb0e8"/><rect x="1558" y="605" width="7" height="10" fill="#f5b800"/><rect x="1558" y="615" width="7" height="6" fill="#aaa"/>
<path d="M1540 627H1545V645L1540 649Z" fill="#c01d2a"/><path d="M1549 627H1554V636L1549 639Z" fill="#34a034"/><path d="M1558 627H1565V634H1558Z" fill="#5bb0e8"/><path d="M1551 640L1565 631V640Z" fill="#111"/><path d="M1548 643H1565" stroke="#111" stroke-width="1.300"/><rect x="1545" y="647" width="20" height="3" fill="#111"/>
<g fill="none" stroke="#333" stroke-width="1.200"><path d="M1562 695a11 11 0 1 0-3 17M1562 722a11 11 0 1 0-3 17M1562 749a11 11 0 1 0-3 17"/></g>
<g><circle cx="1552" cy="702" r="2.800" fill="#f5c400" stroke="#333"/><circle cx="1552" cy="729" r="2.800" fill="#f5c400" stroke="#333"/><circle cx="1552" cy="756" r="2.800" fill="#f5c400" stroke="#333"/></g>
<text x="1557" y="714" font-family="Liberation Sans" font-size="7" fill="#333">x</text><text x="1557" y="741" font-family="Liberation Sans" font-size="7" fill="#333">y</text><text x="1557" y="768" font-family="Liberation Sans" font-size="7" fill="#333">z</text>
<path d="M1548 775H1558" stroke="#333"/><path d="M1553 778V780" stroke="#0a84d8" stroke-width="2"/>
<!-- strip -->
<path d="M1877 221L1885 229M1885 221L1877 229" stroke="#000" stroke-width="2.300"/>
<path d="M1877 247H1886L1884.500 256H1887V258H1876V256H1878.500Z M1881.500 258V263" fill="#222" stroke="#222"/>
<rect x="1874" y="770" width="4" height="5" fill="#f5b800"/><rect x="1879" y="770" width="4" height="5" fill="#c01d2a"/><rect x="1884" y="770" width="4" height="5" fill="#34a034"/><path d="M1874 778H1882M1874 783H1882" stroke="#6a7a8a"/><text x="1883" y="785" font-family="Liberation Mono" font-size="9" fill="#111">A</text>
<!-- model tab shapes -->
<path d="M2 772Q4 788 8 788H54Q58 788 62 772L70 790H134Q136 788 139 772L146 790H207Q210 788 215 772" fill="none" stroke="#444"/>
<path d="M2 772Q4 788 8 788H54Q58 788 61 772Z" fill="#fff" stroke="#444"/>
<path d="M234.500 776V785M230 780.500H239" stroke="#777" stroke-width="1.500"/>
<!-- command -->
<path d="M1876 804V802H1884V809H1881M1874 805H1881V812H1874Z" fill="none" stroke="#222" stroke-width="1.300"/>
<path d="M1901 803L1909 811M1909 803L1901 811" stroke="#111" stroke-width="2"/>
<use href="#up" x="1909" y="833"/><use href="#dn" x="1909" y="901"/>
<path d="M1900 822V911" stroke="#e8e8e8"/>
<!-- status -->
<g transform="translate(660,900)">
<path d="M24 45H31V50L29 52V58H26V52L24 50Z" fill="#667" stroke="#445" stroke-width=".6" transform="translate(-2,-4) scale(1)"/><circle cx="33" cy="53" r="3" fill="#f5c400" stroke="#553"/>
<path d="M58 44H78M58 49H78M58 54H78M63 41V60M69 41V60M74 41V60" stroke="#bbc"/><circle cx="61" cy="44" r="2" fill="#c01d2a"/><path d="M62 45L74 56H69L71 61H68L66 57L63 60Z" fill="#222"/>
<path d="M92 41V60M97 41V60M102 41V60M107 41V60M90 44H110M90 49H110M90 54H110M90 58H110" stroke="#111"/>
<path d="M122 47L139 42V60L122 55ZM122 51H139" fill="none" stroke="#333"/>
<circle cx="165" cy="50" r="6" fill="none" stroke="#333"/><path d="M165 45V50L168 53" stroke="#0a84d8" fill="none"/><path d="M172 50H178M169 44L175 39M169 56L175 61" stroke="#0a84d8" stroke-dasharray="2 1"/>
<text x="192" y="49" font-family="Liberation Sans" font-size="9" fill="#0a6cc0">E</text><path d="M198 43L208 54H204L206 59H203L201 55L198 58Z" fill="#222"/><circle cx="208" cy="56" r="2.200" fill="#c01d2a"/><path d="M192 59H208" stroke="#333" stroke-dasharray="2 1"/>
<text x="225" y="47" font-family="Liberation Sans" font-size="9" fill="#0a6cc0">E</text><path d="M232 44L238 58M236 44L228 58M229 50H237M227 54H239M225 59H241" stroke="#333"/>
<path d="M259 43H266L272 51V59H259Z" fill="none" stroke="#333" stroke-dasharray="2 1"/><path d="M262 46H265L269 52V56H262Z" fill="none" stroke="#445"/>
<rect x="293" y="51" width="10" height="8" fill="none" stroke="#222" stroke-width="1.300"/><rect x="300" y="41" width="4" height="4" fill="#0a84d8"/><rect x="290" y="47" width="2" height="3" fill="#0a84d8"/><rect x="290" y="53" width="2" height="3" fill="#0a84d8"/><rect x="295" y="47" width="2" height="2" fill="#0a84d8"/>
<path d="M527 46.500H540L533.500 56Z" fill="#222"/>
</g>
</svg>

<!-- Text -->
<div class="t" style="left:28px;top:-3px;font-size:14px;color:#222">New Tab</div>
<div class="t" style="left:1504px;top:11px;font-size:12px;color:#333;height:4px;overflow:hidden;line-height:12px">Bookmarks&nbsp;&nbsp;&nbsp;&nbsp;&nbsp;&nbsp;&nbsp;&nbsp;&nbsp;&nbsp;&nbsp;&nbsp;&nbsp;&nbsp;&nbsp;&nbsp;&nbsp;&nbsp;&nbsp;&nbsp;?</div>
<div class="t" style="left:56px;top:31px;font-size:15.3px;letter-spacing:.1px">Drafting and Annotation</div>
<div class="t" style="left:709px;top:34px;font-size:18px;color:#4b5866;letter-spacing:.09px">DraftSight Premium - D:\Divya\IndoorNavigation\FloorMaps\Converted\Floor03 Vertical.dwg</div>
<div class="t" style="left:1821px;top:68px;font-size:15px;font-weight:bold;color:#222">?</div>

<div class="t" style="left:62px;top:70px;color:#2d6a9f">Home</div>
<div class="t" style="left:127px;top:70px">Insert</div>
<div class="t" style="left:187px;top:70px;letter-spacing:.3px">Import</div>
<div class="t" style="left:256px;top:70px">Export</div>
<div class="t" style="left:323px;top:70px">Attach</div>
<div class="t" style="left:391px;top:70px">Annotate</div>
<div class="t" style="left:475px;top:70px">Sheet</div>
<div class="t" style="left:536px;top:70px">Constraints</div>
<div class="t" style="left:633px;top:70px;letter-spacing:.2px">Manage</div>
<div class="t" style="left:711px;top:70px">View</div>
<div class="t" style="left:767px;top:70px;letter-spacing:.2px">Powertools</div>
<div class="t" style="left:864px;top:70px;letter-spacing:-1px">3DEXPERIENCE</div>
<div class="t" style="left:989px;top:70px">Mechanical</div>

<div class="t" style="left:388px;top:102px;font-size:14.8px">Text</div>
<div class="t" style="left:388px;top:131px;font-size:14.8px">Dimension</div>
<div class="t" style="left:388px;top:161px;font-size:14.8px">Centerline</div>
<div class="t" style="left:571px;top:161px;font-size:15px">0</div>
<div class="t" style="left:774px;top:102px;font-size:14.2px">ByLayer</div>
<div class="t" style="left:749px;top:131px;font-size:14.5px">ByLayer</div>
<div class="t" style="left:820px;top:131px;font-size:15px">Solid line</div>
<div class="t" style="left:786px;top:161px;font-size:14.2px">ByLayer</div>
<div class="t" style="left:962px;top:102px;font-size:14.5px;color:#888">ByColor</div>
<div class="t" style="left:1101px;top:131px;font-size:14.5px">0</div>
<div class="t" style="left:1138px;top:144px;font-size:15px">Quick</div>
<div class="t" style="left:1136px;top:164px;font-size:15px">Group</div>

<div class="t l" style="left:66px;top:190px">Draw</div>
<div class="t l" style="left:233px;top:190px;font-size:15.5px">Modify</div>
<div class="t l" style="left:383px;top:190px;font-size:15.2px">Annotations</div>
<div class="t l" style="left:582px;top:190px">Layers</div>
<div class="t l" style="left:884px;top:190px">Properties</div>
<div class="t l" style="left:1149px;top:190px">Groups</div>

<div class="t" style="left:64px;top:217px;font-size:12.3px">NONAME_0.dwg</div>
<div class="t" style="left:304px;top:217px;font-size:12.3px">NONAME_1.dwg</div>
<div class="t" style="left:530px;top:216px;font-size:13px">Floor03 Vertical.dwg</div>
<div class="t" style="left:784px;top:217px;font-size:13px">Basement.dwg*</div>

<div class="t s" style="left:1533px;top:226px">No Selection</div>
<div class="t" style="left:1670px;top:255px;font-size:18px;font-weight:bold;color:#222">?</div>
<div class="t" style="left:1537px;top:286px;font-size:12.5px;font-weight:bold;color:#111">General</div>
<div class="t" style="left:1537px;top:513px;font-size:12.5px;font-weight:bold;color:#111">PrintStyle</div>
<div class="t" style="left:1537px;top:659px;font-size:12.5px;font-weight:bold;color:#111">View</div>
<div class="t s" style="left:1580px;top:348px">0</div>
<div class="t s" style="left:1604px;top:375px">ByLayer</div>
<div class="t s" style="left:1580px;top:402px;letter-spacing:.2px">1.0000</div>
<div class="t s" style="left:1580px;top:429px">ByLayer</div>
<div class="t s" style="left:1644px;top:429px;letter-spacing:.1px">Solid line</div>
<div class="t s" style="left:1580px;top:456px;letter-spacing:-.3px">——— ByLayer</div>
<div class="t s" style="left:1580px;top:483px">ByLayer</div>
<div class="t s" style="left:1580px;top:548px">No</div>
<div class="t s" style="left:1580px;top:575px">None</div>
<div class="t s" style="left:1580px;top:602px;color:#888">ByColor</div>
<div class="t s" style="left:1580px;top:629px">None</div>
<div class="t s" style="left:1580px;top:693px">200.7453</div>
<div class="t s" style="left:1580px;top:720px">139.2152</div>
<div class="t s" style="left:1580px;top:747px">0.0000</div>
<svg class="a" style="left:1584px;top:377px" width="16" height="14"><circle cx="7" cy="7" r="6" fill="#fff" stroke="#444"/></svg>

<div class="r" style="left:1908px;top:241px">Home</div>
<div class="r" style="left:1908px;top:313px">Properties</div>
<div class="r" style="left:1908px;top:416px;letter-spacing:-.35px">G-code Generator</div>
<div class="r" style="left:1908px;top:552px;letter-spacing:-1.05px">3D CONTENTCENTRAL</div>
<div class="r" style="left:1908px;top:671px;letter-spacing:-.3px">HomeByMe</div>
<div class="r" style="left:1883px;top:726px;font-weight:bold;color:#111">Properties</div>

<div class="t" style="left:12px;top:772px;font-size:13.5px;font-weight:bold;color:#111">Model</div>
<div class="t" style="left:77px;top:772px;font-size:12.5px">Layout1</div>
<div class="t" style="left:155px;top:772px;font-size:12.5px">Layout2</div>
<div class="t" style="left:4px;top:799px;font-size:13px;font-weight:bold;color:#111">Command Window</div>
<div class="t" style="left:5px;top:828px;font-size:16.2px;color:#111;letter-spacing:.25px">: _SAVE</div>
<div class="t" style="left:5px;top:848px;font-size:16.2px;color:#111">Drawing saved in R2018 format.</div>
<div class="t" style="left:5px;top:866px;font-size:16.2px;color:#111">:</div>
<div class="t" style="left:5px;top:887px;font-size:16.2px;color:#111;letter-spacing:.25px">: _SAVE</div>
<div class="t" style="left:5px;top:912px;font-size:16.2px;color:#111">:</div>
<div class="t" style="left:2px;top:940px;font-size:14.8px">Creates a multiple-line text entity:&nbsp; NOTE</div>
<div class="t" style="left:988px;top:940px;font-size:14px">Dynamic CCS</div>
<div class="t" style="left:1096px;top:940px;font-size:15px">Annotation</div>
<div class="t" style="left:1214px;top:940px;font-size:14px">(1:1)&nbsp; (235.0904,395.6954,0.0000)</div>
</body></html>
